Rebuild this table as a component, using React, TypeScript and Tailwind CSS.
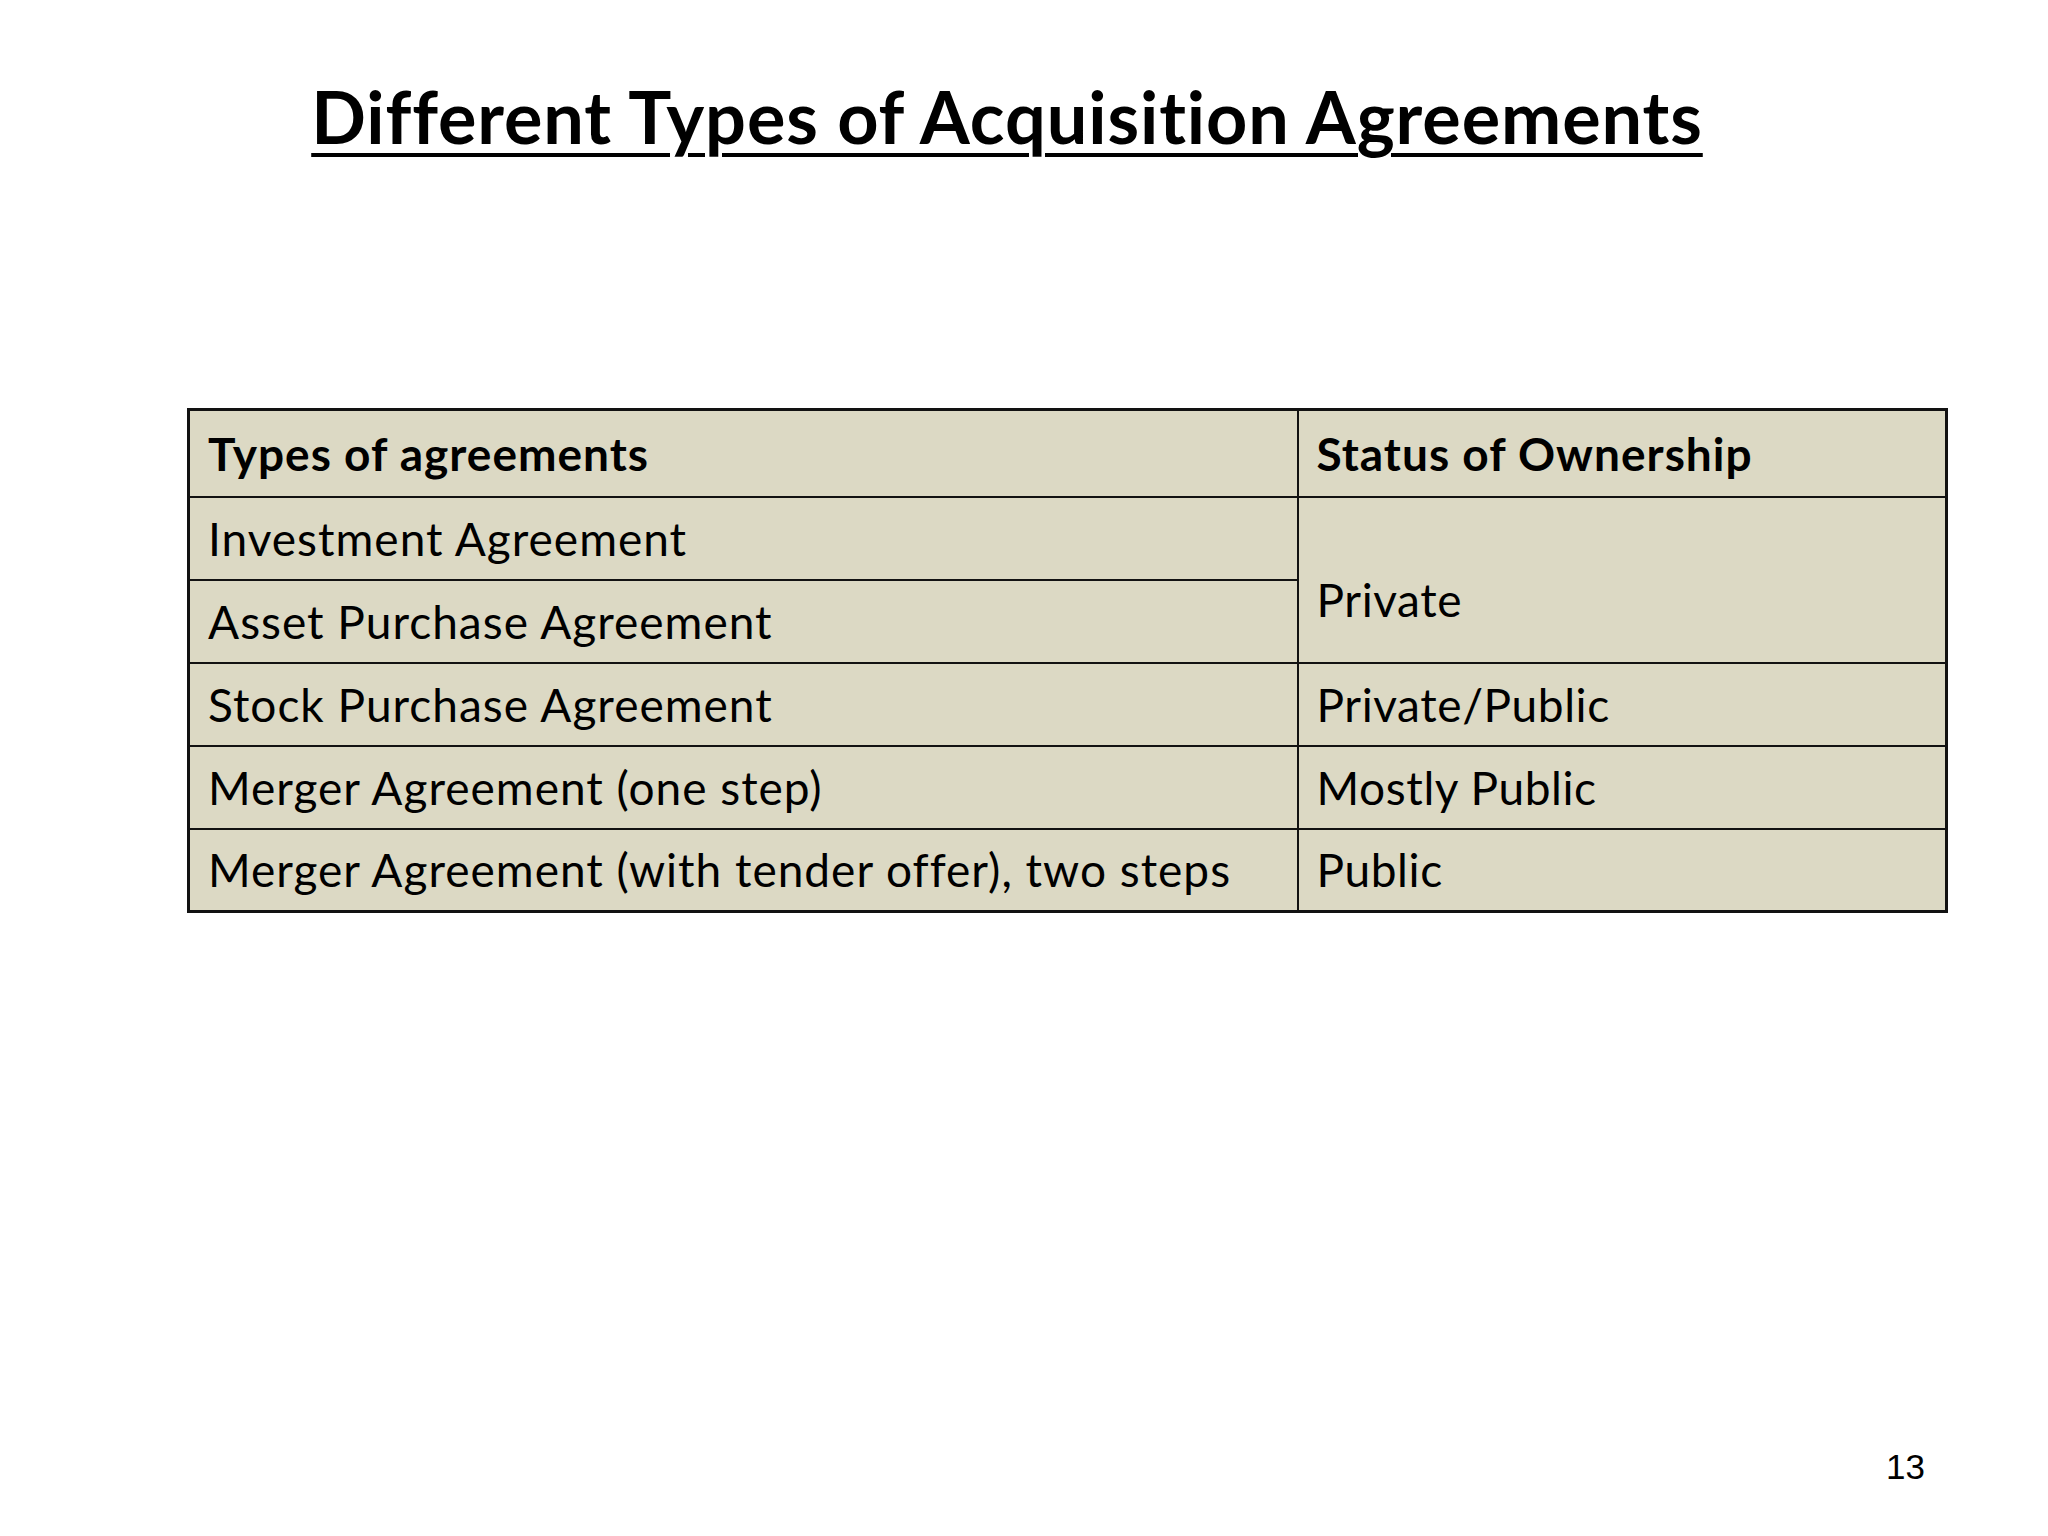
const rows: { type: string; status?: string; span?: number }[] = [
  { type: 'Investment Agreement', status: 'Private', span: 2 },
  { type: 'Asset Purchase Agreement' },
  { type: 'Stock Purchase Agreement', status: 'Private/Public' },
  { type: 'Merger Agreement (one step)', status: 'Mostly Public' },
  { type: 'Merger Agreement (with tender offer), two steps', status: 'Public' },
];

export default function App() {
  return (
    <div
      className="w-[2048px] h-[1536px] bg-white flex flex-col text-black [font-variant-ligatures:none]"
      style={{ fontFamily: 'Lato, "Open Sans", sans-serif' }}
    >
      <h1 className="pt-[73px] pr-[34px] text-center text-[72px] leading-[86px] font-bold tracking-[0.9px]">
        <span className="underline decoration-[4px] underline-offset-[9px]">
          Different Types of Acquisition Agreements
        </span>
      </h1>

      <div className="pl-[187px] pt-[249px]">
        <table className="w-[1758px] table-fixed border-collapse border-[3px] border-[#121212] bg-[#dcd9c4] text-[46px] tracking-[1px]">
          <colgroup>
            <col className="w-[1109px]" />
            <col className="w-[649px]" />
          </colgroup>
          <thead>
            <tr className="h-[87px]">
              <th className="border-2 border-[#121212] px-[18px] text-left align-middle font-bold">Types of agreements</th>
              <th className="border-2 border-[#121212] px-[18px] text-left align-middle font-bold">Status of Ownership</th>
            </tr>
          </thead>
          <tbody>
            {rows.map((r) => (
              <tr key={r.type} className="h-[83px]">
                <td className="border-2 border-[#121212] px-[18px] align-middle whitespace-nowrap">{r.type}</td>
                {r.status && (
                  <td
                    rowSpan={r.span ?? 1}
                    className={
                      'border-2 border-[#121212] px-[18px] align-middle tracking-[0.6px] ' + (r.span ? 'pt-[40px]' : '')
                    }
                  >
                    {r.status}
                  </td>
                )}
              </tr>
            ))}
          </tbody>
        </table>
      </div>

      <div className="flex-1" />
      <div className="flex justify-end pr-[123px] pb-[49px]">
        <span className="text-[35px] leading-[1.15]" style={{ fontFamily: '"Liberation Sans", Arial, sans-serif' }}>
          13
        </span>
      </div>
    </div>
  );
}
